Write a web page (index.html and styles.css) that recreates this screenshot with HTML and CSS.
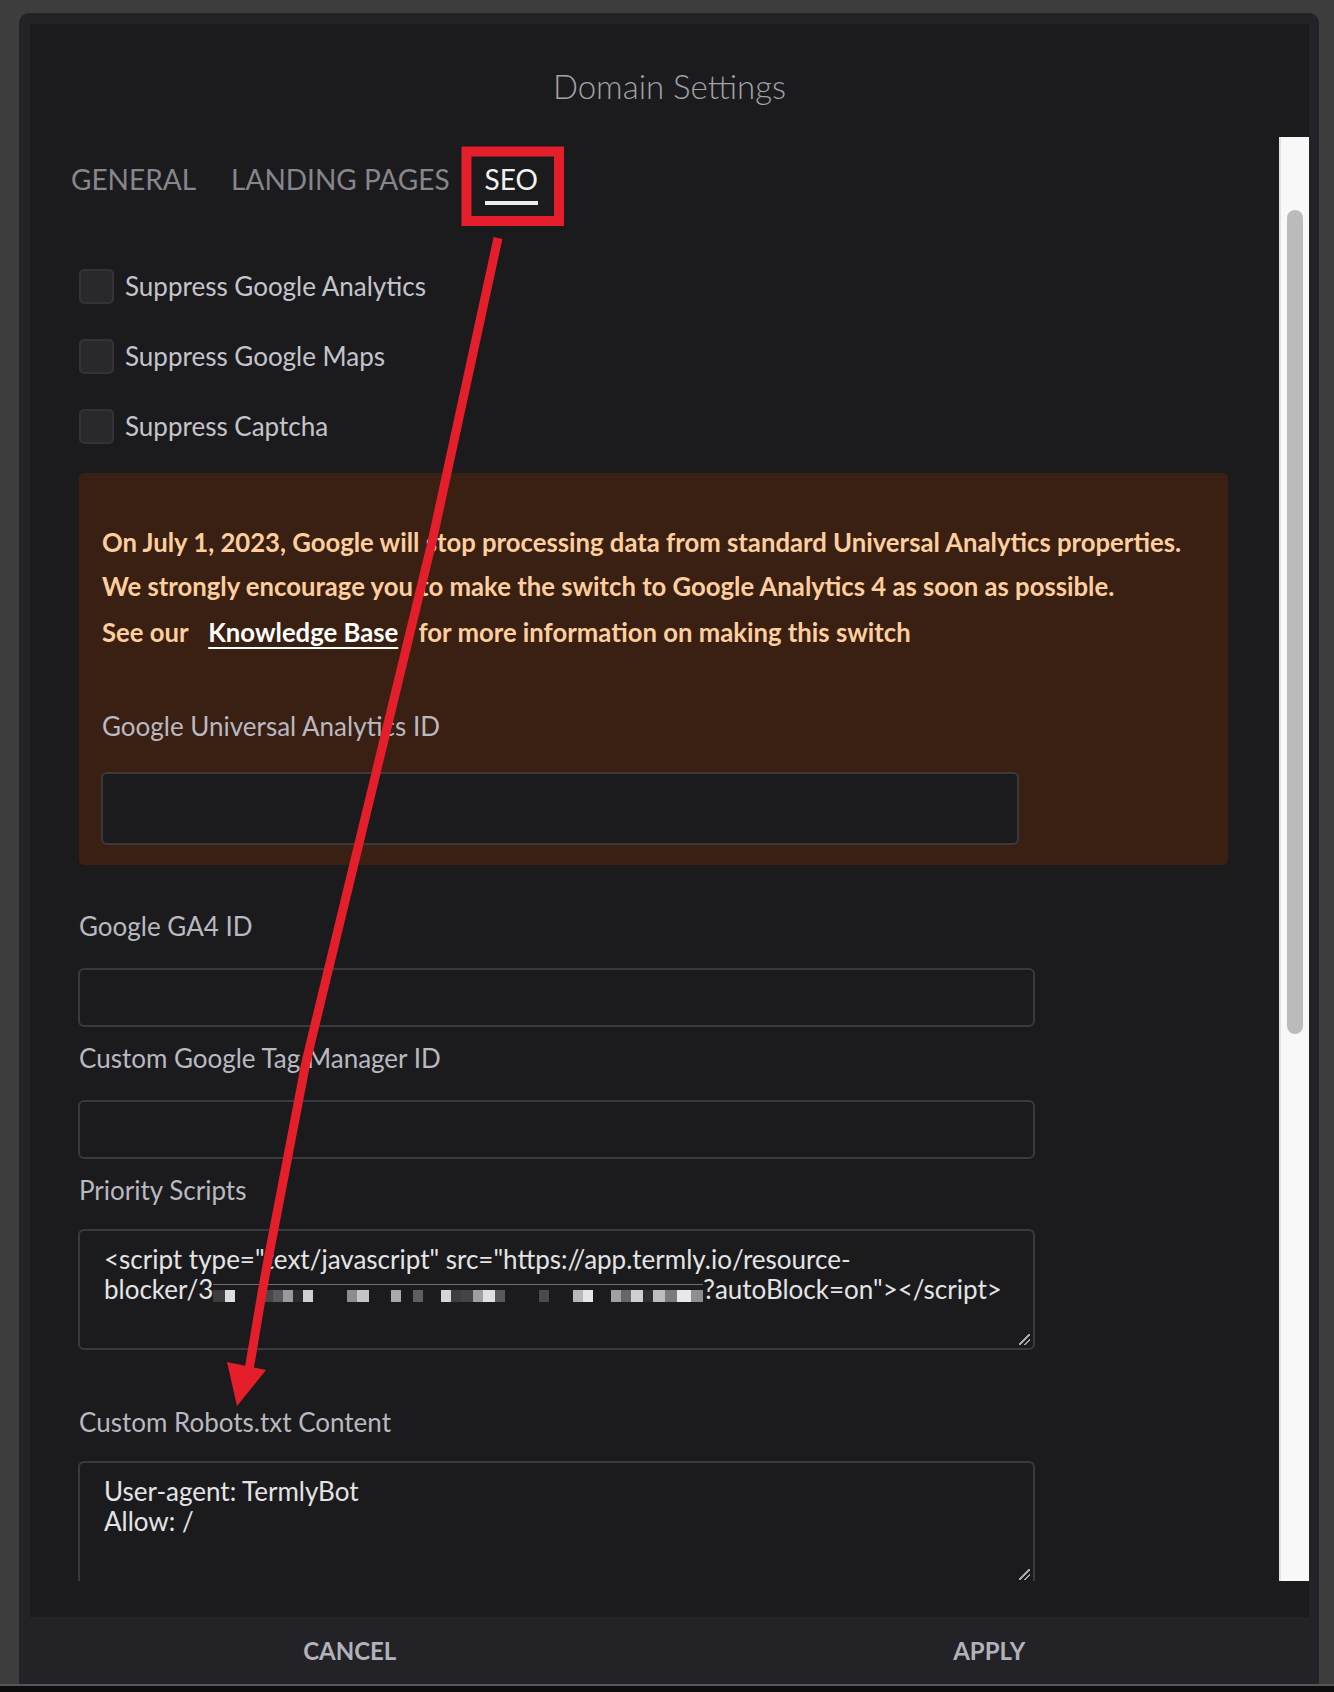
FILE: index.html
```html
<!DOCTYPE html>
<html>
  <head>
    <title>Domain Settings</title>
    <link rel="stylesheet" href="styles.css">
  </head>
  <body>
    <div class="modal">
      <div class="panel">
        <h1 class="title">Domain Settings</h1>
        <div class="scroll-area">
          <div class="scroll-content">
            <div class="tabs">
              <span class="tab">General</span>
              <span class="tab">Landing Pages</span>
              <span class="tab active">SEO</span>
            </div>

            <div class="checks">
              <div class="check"><span class="box"></span>Suppress Google Analytics</div>
              <div class="check"><span class="box"></span>Suppress Google Maps</div>
              <div class="check"><span class="box"></span>Suppress Captcha</div>
            </div>

            <div class="warning">
              <p class="warning-text">
                On July 1, 2023, Google will stop processing data from standard Universal Analytics properties.<br>
                We strongly encourage you to make the switch to Google Analytics 4 as soon as possible.
              </p>
              <p class="warning-text more">
                See our <a class="kb-link" href="#">Knowledge Base</a> for more information on making this switch
              </p>
              <div class="field-label ua-label">Google Universal Analytics ID</div>
              <input class="input ua-input" value="">
            </div>

            <div class="field first">
              <div class="field-label">Google GA4 ID</div>
              <input class="input" value="">
            </div>
            <div class="field">
              <div class="field-label">Custom Google Tag Manager ID</div>
              <input class="input" value="">
            </div>
            <div class="field area">
              <div class="field-label">Priority Scripts</div>
              <div class="textarea scripts">&lt;script type="text/javascript" src="https://app.termly.io/resource-<br>blocker/3<span class="redacted"></span>?autoBlock=on"&gt;&lt;/script&gt;<span class="grip"></span></div>
            </div>
            <div class="field area">
              <div class="field-label">Custom Robots.txt Content</div>
              <div class="textarea robots">User-agent: TermlyBot<br>Allow: /<span class="grip"></span></div>
            </div>
          </div>
          <div class="scrollbar"><div class="thumb"></div></div>
        </div>
      </div>
      <div class="footer">
        <button class="footer-btn">CANCEL</button>
        <button class="footer-btn">APPLY</button>
      </div>
    </div>
    <div class="bottom-edge"></div>

    <!-- red annotation drawn over the screenshot -->
    <svg class="annotation" width="1334" height="1692" viewBox="0 0 1334 1692">
      <rect x="466.5" y="151.5" width="92.5" height="69.5" fill="none" stroke="#e41e2b" stroke-width="10" />
      <polyline points="498,238 432,542 306,1062 268,1260 262,1293 249,1370" fill="none" stroke="#e41e2b" stroke-width="9" stroke-linejoin="round" />
      <polygon points="227,1362 266,1370 237,1406" fill="#e41e2b" />
    </svg>
  </body>
</html>
```

FILE: styles.css
```css
* {
  box-sizing: border-box;
}

body {
  margin: 0;
  background: #3d3d3d;
  font-family: "Lato", "Noto Sans", sans-serif;
}

.modal {
  margin: 13px 15px 0 19px;
  height: 1671px;
  background: #232327;
  border-radius: 10px 10px 0 0;
  padding: 11px 10px 0 11px;
  display: flex;
  flex-direction: column;
}

.panel {
  height: 1593px;
  background: #1b1b1d;
  display: flex;
  flex-direction: column;
}

.title {
  margin: 0;
  height: 113px;
  padding-top: 42px;
  font-size: 33px;
  font-weight: 300;
  line-height: 40px;
  text-align: center;
  color: #a2a2aa;
}

.scroll-area {
  height: 1444px;
  display: flex;
}

.scroll-content {
  flex: 1;
  overflow: hidden;
  padding: 25px 51px 0 49px;
}

.scrollbar {
  width: 30px;
  background: #f8f8f8;
  border-left: 2px solid #e2e2e2;
}

.scrollbar .thumb {
  margin: 73px 0 0 6px;
  width: 16px;
  height: 824px;
  border-radius: 8px;
  background: #bbbbbb;
}

/* tabs */
.tabs {
  display: flex;
  gap: 35px;
  margin-left: -8px;
}

.tab {
  font-size: 28px;
  line-height: 34px;
  color: #86868d;
  text-transform: uppercase;
}

.tab.active {
  color: #f2f2f4;
  padding-bottom: 5px;
  border-bottom: 4px solid #ececee;
}

/* checkboxes */
.checks {
  margin-top: 46px;
}

.check {
  display: flex;
  align-items: center;
  gap: 11px;
  height: 70px;
  font-size: 26px;
  color: #c4c4cc;
}

.check .box {
  width: 35px;
  height: 35px;
  border-radius: 5px;
  background: #29292d;
  border: 2px solid #333337;
}

/* GA warning */
.warning {
  margin-top: 12px;
  background: #3a1f13;
  border-radius: 5px;
  padding: 47px 23px 20px 23px;
}

.warning-text {
  margin: 0;
  font-size: 25.7px;
  line-height: 44px;
  font-weight: 700;
  color: #fdcf9f;
}

.warning-text.more {
  margin-top: 2px;
}

.kb-link {
  color: #ffffff;
  margin: 0 14px;
  text-decoration: underline;
  text-decoration-thickness: 2px;
  text-underline-offset: 5px;
}

.warning .ua-label {
  margin-top: 57px;
}

/* fields */
.field-label {
  font-size: 26px;
  line-height: 30px;
  color: #b9b9c1;
}

.field.first {
  margin-top: 46px;
}

.field .field-label {
  margin-bottom: 27px;
}

.field.area .field-label {
  margin-bottom: 24px;
}

.input {
  display: block;
  width: 957px;
  height: 59px;
  margin: 0 0 16px -1px;
  background: #1b1b1d;
  border: 2px solid #3a3a3e;
  border-radius: 6px;
  outline: none;
}

.warning .ua-input {
  margin: 31px 0 0 -1px;
  width: 918px;
  height: 73px;
}

.textarea {
  position: relative;
  width: 957px;
  margin-left: -1px;
  padding: 13px 24px 0 24px;
  border: 2px solid #3a3a3e;
  border-radius: 6px;
  font-size: 26px;
  line-height: 30px;
  color: #e4e4e6;
}

.textarea.scripts {
  height: 121px;
  margin-bottom: 57px;
}

.textarea.robots {
  height: 124px;
}

.redacted {
  display: inline-block;
  width: 490px;
  height: 20px;
  vertical-align: -3px;
  background:
    linear-gradient(#6e6e70, #6e6e70) 0 2px / 100% 1px no-repeat,
    linear-gradient(90deg,
      #3c3c3e 0 12px, #dcdcdc 12px 22px, transparent 22px 50px,
      #47474a 50px 60px, #5a5a5d 60px 70px, #9a9a9c 70px 80px, #2b2b2d 80px 90px,
      #cfcfcf 90px 100px, transparent 100px 134px, #8c8c8e 134px 144px, #c4c4c4 144px 156px,
      transparent 156px 178px, #a9a9ab 178px 188px, transparent 188px 200px,
      #5e5e60 200px 210px, transparent 210px 228px, #d6d6d6 228px 238px, #3e3e40 238px 248px,
      #444446 248px 260px, #9f9fa1 260px 270px, #e0e0e0 270px 282px, #58585a 282px 292px,
      transparent 292px 326px, #4a4a4c 326px 336px, transparent 336px 360px,
      #b8b8ba 360px 370px, #e6e6e6 370px 380px, transparent 380px 398px,
      #a0a0a2 398px 408px, #666668 408px 418px, #d0d0d0 418px 430px, #2e2e30 430px 440px,
      #bdbdbf 440px 452px, #7a7a7c 452px 464px, #e8e8e8 464px 478px, #8e8e90 478px 490px
    ) 0 8px / 100% 12px no-repeat;
}

.grip {
  position: absolute;
  right: 3px;
  bottom: 3px;
  width: 11px;
  height: 11px;
  background: linear-gradient(135deg, transparent 0 45%, #a8a8aa 45% 55%, transparent 55% 70%, #a8a8aa 70% 80%, transparent 80%);
}

/* footer */
.footer {
  display: flex;
  height: 67px;
}

.footer-btn {
  flex: 1;
  background: none;
  border: 0;
  font-family: "Lato", "Noto Sans", sans-serif;
  font-size: 24px;
  font-weight: 700;
  color: #b2b2ba;
}

.bottom-edge {
  height: 8px;
  border-top: 2px solid #57575b;
  background: #0d0d0e;
}

.annotation {
  position: absolute;
  top: 0;
  left: 0;
  pointer-events: none;
}
```
